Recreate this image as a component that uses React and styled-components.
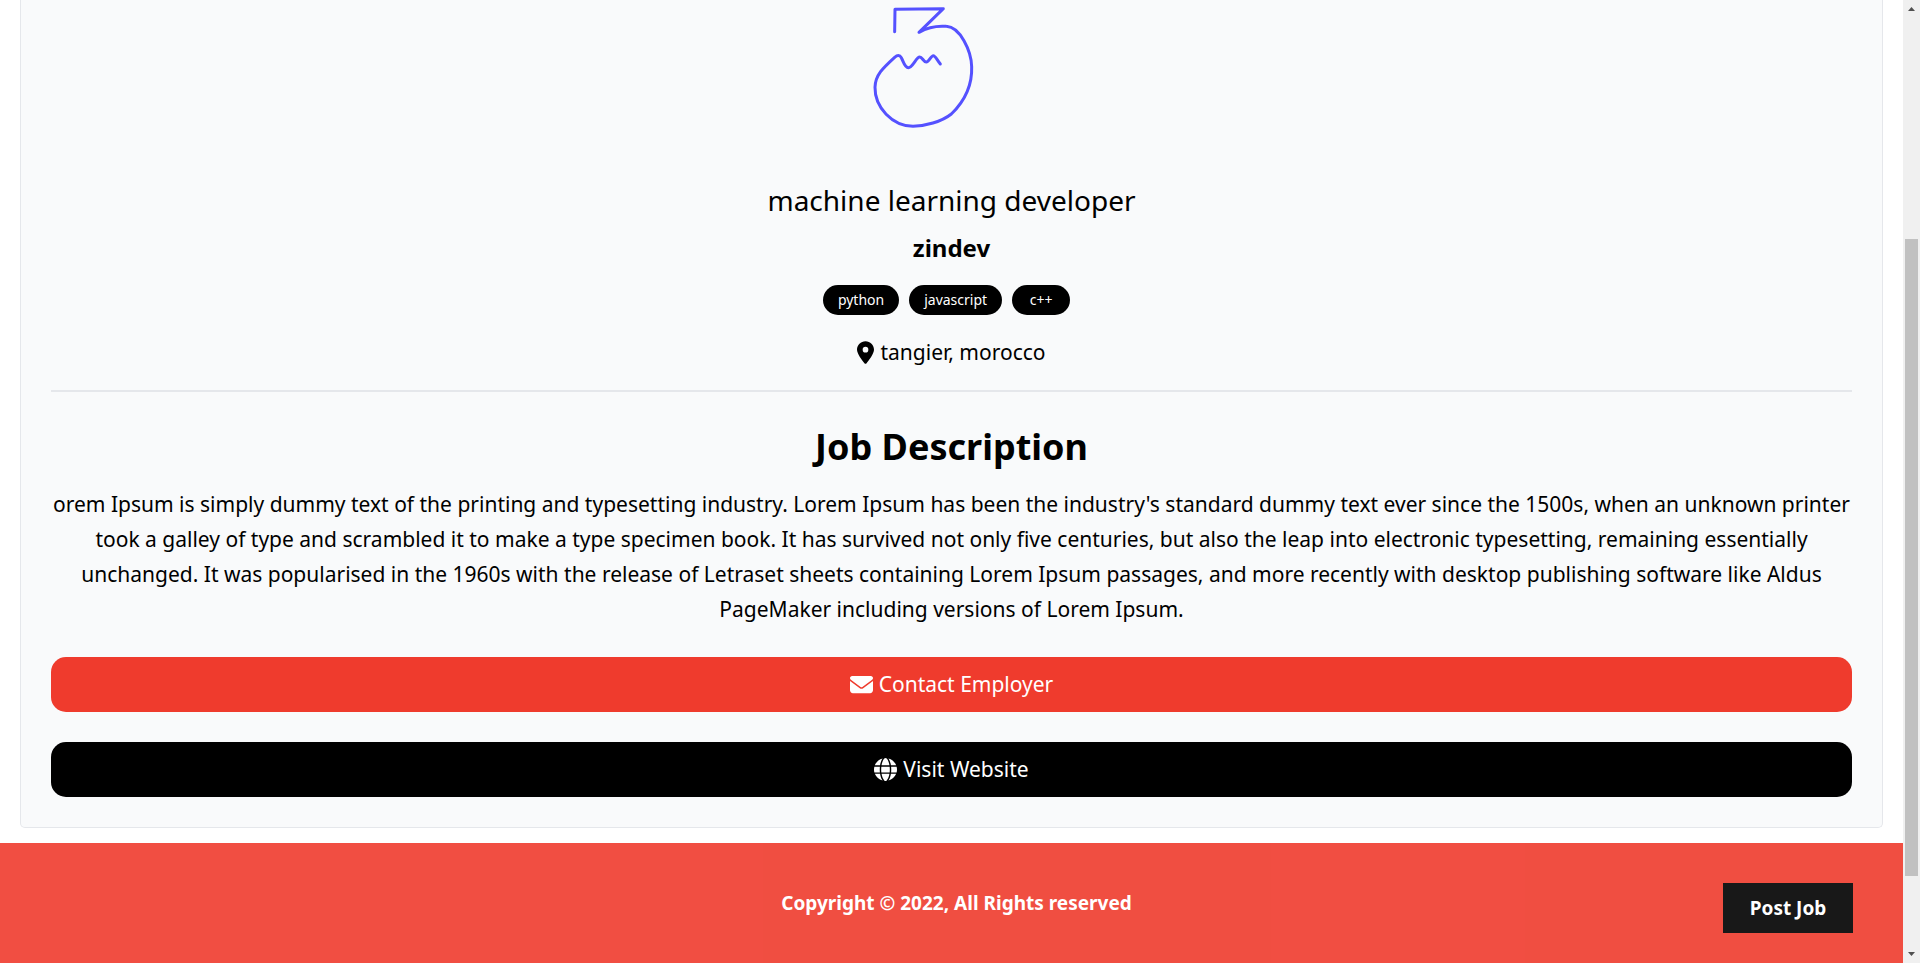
import React from 'react';
import styled, { createGlobalStyle } from 'styled-components';
import { FaEnvelope, FaGlobe, FaLocationDot } from 'react-icons/fa6';

const GlobalStyle = createGlobalStyle`
  *, *::before, *::after { box-sizing: border-box; }
  body {
    margin: 0;
    background: #fff;
    color: #000;
    font-family: "Segoe UI", "Noto Sans", "Open Sans", sans-serif;
    font-size: 21px;
    line-height: 35px;
  }
  h1, h2, h3, p, ul { margin: 0; padding: 0; }
  a { color: inherit; text-decoration: none; }
`;

const Window = styled.div`
  display: grid;
  grid-template-columns: minmax(0, 1fr) 17px;
  min-height: 100vh;
`;

const Page = styled.div`
  display: flex;
  flex-direction: column;
`;

const Card = styled.main`
  display: flex;
  flex-direction: column;
  align-items: center;
  margin: 0 20px 15px;
  padding: 0 30px 30px;
  text-align: center;
  background: #f9fafb;
  border: 1px solid #e5e7eb;
  border-top: 0;
  border-radius: 0 0 5px 5px;
`;

const Logo = styled.svg`
  width: 240px;
  height: 150px;
  margin-bottom: 30px;
`;

const JobTitle = styled.h1`
  margin-bottom: 10px;
  font-size: 28px;
  font-weight: 400;
  line-height: 40px;
`;

const Company = styled.h2`
  margin-bottom: 20px;
  font-size: 24px;
  font-weight: 700;
  line-height: 35px;
`;

const Tags = styled.ul`
  display: flex;
  margin-bottom: 20px;
  list-style: none;
`;

const Tag = styled.li`
  min-width: 58px;
  margin-right: 10px;
  padding: 5px 15px;
  font-size: 14px;
  line-height: 20px;
  color: #fff;
  background: #000;
  border-radius: 15px;
`;

const Location = styled.p`
  display: flex;
  align-items: center;
  gap: 6px;
  margin-bottom: 20px;

  svg {
    width: 17px;
    height: 23px;
  }
`;

const Divider = styled.hr`
  width: 100%;
  margin: 0 0 32px;
  border: 0;
  border-top: 2px solid #e5e7eb;
`;

const SectionTitle = styled.h3`
  margin-bottom: 18px;
  font-size: 36px;
  font-weight: 700;
  line-height: 45px;
`;

const Description = styled.p`
  margin-bottom: 30px;
`;

const Actions = styled.div`
  display: flex;
  flex-direction: column;
  gap: 30px;
  width: 100%;
`;

const ActionLink = styled.a`
  display: flex;
  align-items: center;
  justify-content: center;
  gap: 6px;
  padding: 10px 0;
  color: #fff;
  background: ${({ $color }) => $color};
  border-radius: 15px;

  svg {
    width: 23px;
    height: 23px;
  }
`;

const Footer = styled.footer`
  display: grid;
  grid-template-columns: 1fr auto 1fr;
  align-items: center;
  min-height: 120px;
  padding: 0 50px;
  font-size: 19px;
  font-weight: 700;
  line-height: 30px;
  color: #fff;
  background: #ef3b2d;
  opacity: 0.9;
`;

const Copyright = styled.p`
  grid-column: 2;
  margin-left: 10px;
`;

const PostJob = styled.a`
  align-self: start;
  justify-self: end;
  min-width: 130px;
  margin-top: 40px;
  padding: 10px 25px;
  text-align: center;
  background: #000;
`;

const Scrollbar = styled.div`
  position: sticky;
  top: 0;
  display: flex;
  flex-direction: column;
  height: 100vh;
  background: #f0f0f0;
`;

const Arrow = styled.svg`
  width: 17px;
  height: 17px;
  fill: #505050;
`;

const Track = styled.div`
  flex: 1;
  display: grid;
  grid-template-rows: 222fr 637fr 70fr;
`;

const Thumb = styled.div`
  grid-row: 2;
  margin: 0 2px;
  background: #c1c1c1;
`;

const tags = ['python', 'javascript', 'c++'];

export default function App() {
  return (
    <>
      <GlobalStyle />
      <Window>
        <Page>
          <Card>
            <Logo viewBox="-23 0 720 450" role="img" aria-label="zindev logo">
              <path
                d="M165 95 L166 28 L311 26 L238 97 C266 81 296 77 320 79 C362 81 395 154 396 200 C398 255 375 303 335 342 C305 366 256 378 220 379 C158 378 105 322 106 262 C107 225 130 204 165 172 C173 165 180 164 185 173 C192 186 195 203 206 203 C219 203 230 171 240 171 C248 171 252 187 260 186 C268 186 274 167 281 167 C287 167 292 180 302 192"
                fill="none"
                stroke="#5551ff"
                strokeWidth="9"
                strokeLinecap="round"
                strokeLinejoin="round"
              />
            </Logo>
            <JobTitle>machine learning developer</JobTitle>
            <Company>zindev</Company>
            <Tags>
              {tags.map((tag) => (
                <Tag key={tag}><a href="#tag">{tag}</a></Tag>
              ))}
            </Tags>
            <Location><FaLocationDot aria-hidden="true" />tangier, morocco</Location>
            <Divider />
            <SectionTitle>Job Description</SectionTitle>
            <Description>
              orem Ipsum is simply dummy text of the printing and typesetting industry. Lorem Ipsum has
              been the industry's standard dummy text ever since the 1500s, when an unknown printer took
              a galley of type and scrambled it to make a type specimen book. It has survived not only
              five centuries, but also the leap into electronic typesetting, remaining essentially
              unchanged. It was popularised in the 1960s with the release of Letraset sheets containing
              Lorem Ipsum passages, and more recently with desktop publishing software like Aldus
              PageMaker including versions of Lorem Ipsum.
            </Description>
            <Actions>
              <ActionLink href="#contact" $color="#ef3b2d"><FaEnvelope aria-hidden="true" />Contact Employer</ActionLink>
              <ActionLink href="#website" $color="#000"><FaGlobe aria-hidden="true" />Visit Website</ActionLink>
            </Actions>
          </Card>
          <Footer>
            <Copyright>Copyright © 2022, All Rights reserved</Copyright>
            <PostJob href="#post">Post Job</PostJob>
          </Footer>
        </Page>
        <Scrollbar aria-hidden="true">
          <Arrow viewBox="0 0 17 17"><path d="M5 11 L8.5 7 L12 11 Z" /></Arrow>
          <Track><Thumb /></Track>
          <Arrow viewBox="0 0 17 17"><path d="M5 6 L12 6 L8.5 10 Z" /></Arrow>
        </Scrollbar>
      </Window>
    </>
  );
}
